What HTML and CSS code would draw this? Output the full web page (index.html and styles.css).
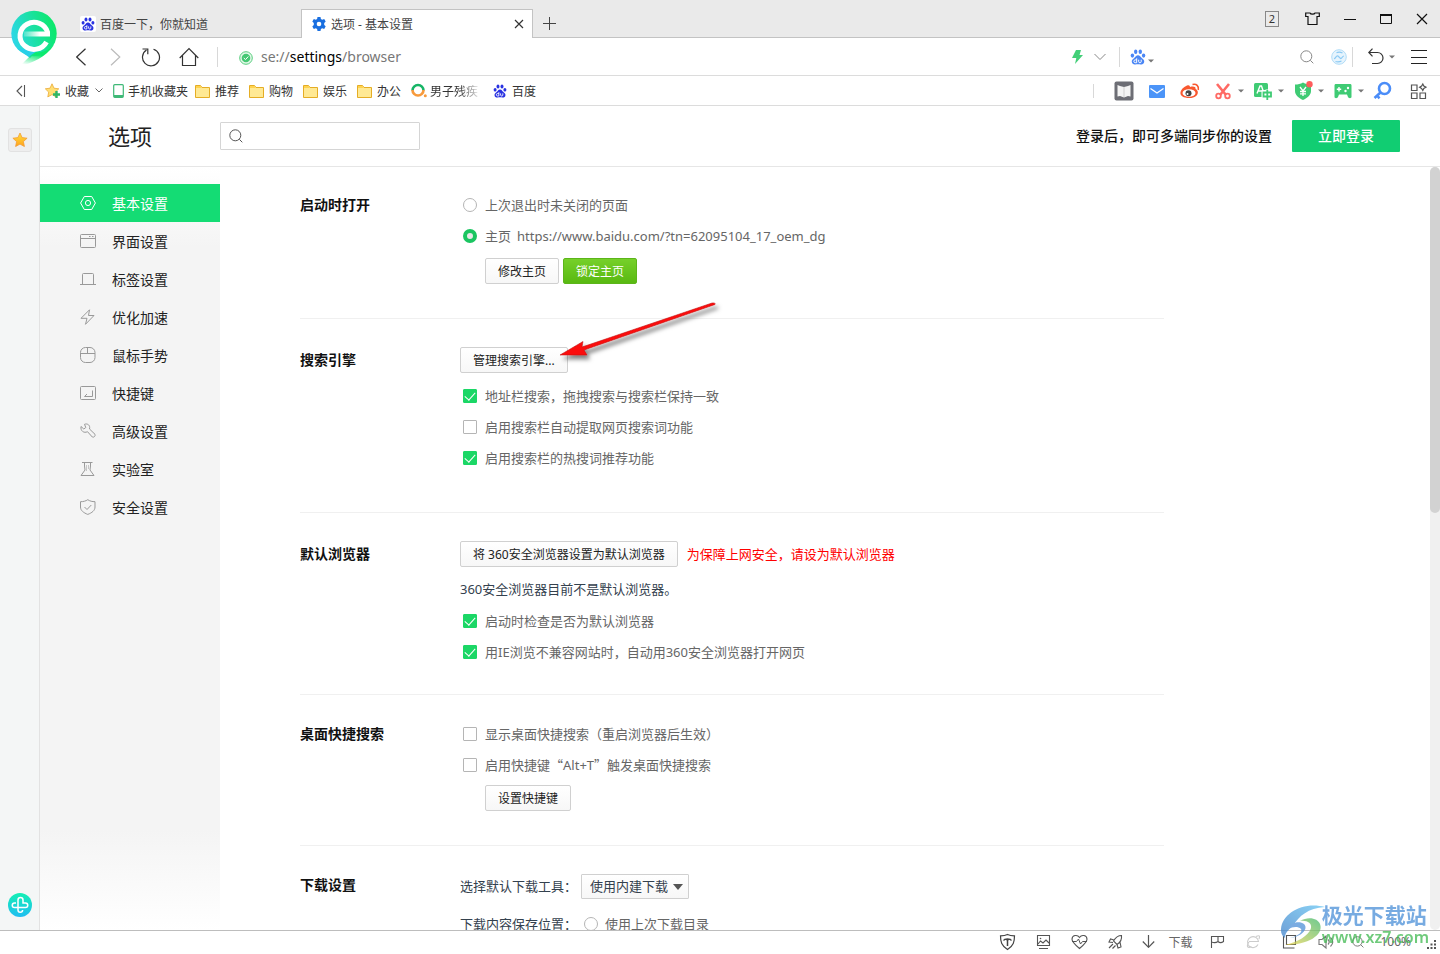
FILE: index.html
```html
<!DOCTYPE html>
<html lang="zh-CN">
<head>
<meta charset="utf-8">
<title>选项 - 基本设置</title>
<link rel="stylesheet" href="styles.css">
</head>
<body>
<svg class="defs" aria-hidden="true">
  <defs>
    <symbol id="paw" viewBox="0 0 16 16">
      <ellipse cx="2.4" cy="6.6" rx="1.7" ry="2.1"/><ellipse cx="5.7" cy="2.8" rx="1.7" ry="2.3"/><ellipse cx="10.3" cy="2.8" rx="1.7" ry="2.3"/><ellipse cx="13.6" cy="6.6" rx="1.7" ry="2.1"/>
      <path d="M8 6.2c1.8 0 2.500 1.600 3.800 2.800 1.500 1.300 2.700 2 2.400 4-.3 1.900-1.700 2.600-3.500 2.400-1.800-.2-3.600-.2-5.400 0-1.800.2-3.200-.5-3.500-2.400-.3-2 .9-2.700 2.400-4C5.500 7.800 6.200 6.200 8 6.200z"/>
      <path d="M6.700 9.300v4.400H5.200c-1.800 0-1.800-2.800 0-2.800h1.500M8.700 10.700v2c0 1.400 2.500 1.400 2.500 0v-2" fill="none" stroke="#fff" stroke-width="1"/>
    </symbol>
    <symbol id="folder" viewBox="0 0 15 14">
      <path d="M.5 1.500h5l1.500 2h7.500v10H.5z" fill="#ffe994" stroke="#e5ad25"/><path d="M1 2h4.300l1.500 2H1z" fill="#ffd34f"/>
    </symbol>
    <symbol id="magnifier" viewBox="0 0 14 14">
      <circle cx="6.300" cy="6.300" r="5.500" fill="none" stroke="currentColor"/><path d="M10.300 10.300l3 3" stroke="currentColor"/>
    </symbol>
    <symbol id="caret" viewBox="0 0 6 4"><path d="M0 .5h6L3 3.500z" fill="#777"/></symbol>
  </defs>
</svg>
<div class="browser">
  <svg class="brand" viewBox="0 0 48 60" role="img" aria-label="360安全浏览器">
    <defs>
      <linearGradient id="brandFill" x1="0" y1=".7" x2="1" y2=".4"><stop offset="0" stop-color="#2fd6ee"/><stop offset=".5" stop-color="#1ce0a8"/><stop offset="1" stop-color="#0be968"/></linearGradient>
      <linearGradient id="brandTail" x1=".7" y1="0" x2=".3" y2="1"><stop offset="0" stop-color="#0be968"/><stop offset=".45" stop-color="#0cea70"/><stop offset="1" stop-color="#10e47b" stop-opacity="0"/></linearGradient>
      <linearGradient id="brandBar" x1="0" x2="1"><stop offset="0" stop-color="#fff" stop-opacity=".2"/><stop offset=".6" stop-color="#fff"/></linearGradient>
    </defs>
    <circle cx="24" cy="24.500" r="22.700" fill="url(#brandFill)"/>
    <path d="M7 39.500l13 9.500 8-8z" fill="#29cfe8"/>
    <path d="M21 46L10 57c12-3 26-9 34-21-6 6-13 8-18 7z" fill="url(#brandTail)"/>
    <path d="M36.500 33A14 13.500 0 1 1 37.600 23.500" fill="none" stroke="#fff" stroke-width="5"/>
    <path d="M14 22.500h26v5H14z" fill="url(#brandBar)"/>
  </svg>

  <header class="tabbar">
    <div class="tab">
      <span class="favicon"><svg width="14" height="14" fill="#2932e1"><use href="#paw"/></svg></span>
      <span class="tab-title">百度一下，你就知道</span>
    </div>
    <div class="tab tab-active">
      <svg width="14" height="14" viewBox="0 0 14 14"><path d="M5.500 0h3l.4 2 1.300.7L12.200 2l1.500 2.600-1.500 1.400v1.900l1.500 1.400-1.500 2.600-2-.6-1.300.7-.4 2h-3l-.4-2-1.300-.7-2 .6L.3 9.400 1.800 8V6L.3 4.600 1.800 2l2 .7L5.100 2z" fill="#1a6fe0"/><circle cx="7" cy="7" r="2.300" fill="#fff"/></svg>
      <span class="tab-title">选项 - 基本设置</span>
      <button class="icon-button" aria-label="关闭标签"><svg width="10" height="10" viewBox="0 0 10 10"><path d="M1 1l8 8M9 1L1 9" stroke="#333" stroke-width="1.200"/></svg></button>
    </div>
    <button class="icon-button new-tab" aria-label="新建标签"><svg width="13" height="13" viewBox="0 0 13 13"><path d="M6.500 0v13M0 6.500h13" stroke="#444"/></svg></button>
    <div class="window-buttons">
      <button class="count">2</button>
      <button class="icon-button" aria-label="皮肤"><svg width="15" height="13" viewBox="0 0 15 13"><path d="M.7 1H5c.5 1.500 4.500 1.500 5 0h4.300v3.500H12v8H3v-8H.7z" fill="none" stroke="#111" stroke-width="1.200"/></svg></button>
      <button class="icon-button" aria-label="最小化"><svg width="12" height="12" viewBox="0 0 12 12"><path d="M0 6.500h12" stroke="#111"/></svg></button>
      <button class="icon-button" aria-label="最大化"><svg width="12" height="12" viewBox="0 0 12 12"><path d="M.5 1.500h11v9H.5z" fill="none" stroke="#111"/><path d="M0 2h12" stroke="#111" stroke-width="2"/></svg></button>
      <button class="icon-button" aria-label="关闭"><svg width="12" height="12" viewBox="0 0 12 12"><path d="M1 1l10 10M11 1L1 11" stroke="#111" stroke-width="1.200"/></svg></button>
    </div>
  </header>

  <div class="addressbar">
    <nav class="nav-buttons">
      <button class="icon-button" aria-label="后退"><svg width="11" height="18" viewBox="0 0 11 18"><path d="M9.500.7L.7 9l8.800 8.300" fill="none" stroke="#333" stroke-width="1.200"/></svg></button>
      <button class="icon-button" aria-label="前进"><svg width="11" height="18" viewBox="0 0 11 18"><path d="M1 .7L9.800 9 1 17.300" fill="none" stroke="#bbb" stroke-width="1.200"/></svg></button>
      <button class="icon-button" aria-label="刷新"><svg width="20" height="20" viewBox="0 0 20 20"><path d="M12.500 2.200a8.500 8.500 0 1 1-7 .9M1.500 2h5.300v5.300" fill="none" stroke="#333" stroke-width="1.200"/></svg></button>
      <button class="icon-button" aria-label="主页"><svg width="20" height="20" viewBox="0 0 20 20"><path d="M.7 11L10 1.500l9.300 9.500M3.500 8.500v10h13v-10" fill="none" stroke="#333" stroke-width="1.200"/></svg></button>
    </nav>
    <span class="divider"></span>
    <svg class="secure" width="14" height="14" viewBox="0 0 14 14"><circle cx="7" cy="7" r="6.300" fill="#e4f8e9" stroke="#58cd7e"/><circle cx="7" cy="7" r="4.300" fill="#45c873"/><path d="M4.800 7l1.700 1.600L9.300 5.500" fill="none" stroke="#fff"/></svg>
    <div class="url"><span>se://</span><b>settings</b><span>/browser</span></div>
    <div class="mode">
      <button class="icon-button" aria-label="极速模式"><svg width="11" height="14" viewBox="0 0 11 14"><path d="M4 0h5L7.500 5H11L3 14l1.300-6H0z" fill="#43cf78"/></svg></button>
      <button class="icon-button" aria-label="切换模式"><svg width="12" height="8" viewBox="0 0 12 8"><path d="M.5 1L6 6.500 11.500 1" fill="none" stroke="#888"/></svg></button>
    </div>
    <span class="divider"></span>
    <div class="quick-search">
      <button class="icon-button" aria-label="百度"><svg width="16" height="16" fill="#4a86f5"><use href="#paw"/></svg><svg class="low" width="6" height="4"><use href="#caret"/></svg></button>
      <input type="text" aria-label="搜索">
      <button class="icon-button muted" aria-label="搜索"><svg width="14" height="14"><use href="#magnifier"/></svg></button>
    </div>
    <button class="icon-button" aria-label="加速"><svg width="16" height="16" viewBox="0 0 16 16"><circle cx="8" cy="8" r="7.300" fill="#e6f4fd" stroke="#b1dcf7"/><path d="M3 9.500c1.500.5 2-3.500 4-2.500l2.500 2.500c1.500.5 1.500-2.500 3.500-2.500M4.500 12.500c2 .5 4 .5 6-.5M5.500 3.700c2-1 4-.8 6 .3" fill="none" stroke="#8ccaf4" stroke-width="1.200"/></svg></button>
    <span class="divider"></span>
    <button class="icon-button undo" aria-label="恢复"><svg width="16" height="17" viewBox="0 0 16 17"><path d="M4.500.700L.8 4.500l3.700 3.800M1 4.500h8.500a5.500 5.500 0 0 1 0 11H4" fill="none" stroke="#333" stroke-width="1.200"/></svg><svg width="6" height="4"><use href="#caret"/></svg></button>
    <button class="icon-button menu" aria-label="菜单"><svg width="16" height="14" viewBox="0 0 16 14"><path d="M0 .5h16M0 7.500h16M0 13.500h16" stroke="#222"/></svg></button>
  </div>

  <div class="bookmarks">
    <button class="icon-button collapse" aria-label="收起"><svg width="10" height="12" viewBox="0 0 10 12"><path d="M6 1L1 6l5 5M8.500 0v12" fill="none" stroke="#555" stroke-width="1.100"/></svg></button>
    <a class="bookmark fav" href="#"><svg width="16" height="16" viewBox="0 0 16 16"><path d="M7 .8l2 4.400 4.800.6-3.500 3.300.9 4.800L7 11.600l-4.200 2.300.9-4.800L.3 5.800 5 5.200z" fill="#ffdf73" stroke="#eba935" stroke-width=".8"/><path d="M11.500 8v7M8 11.500h7" stroke="#2eb667" stroke-width="2.400"/></svg>收藏<svg class="fav-more" width="8" height="5" viewBox="0 0 8 5"><path d="M.5.500L4 4 7.500.500" fill="none" stroke="#666"/></svg></a>
    <a class="bookmark phone" href="#"><svg width="11" height="14" viewBox="0 0 11 14"><rect x=".7" y=".7" width="9.600" height="12.600" rx="1" fill="#fff" stroke="#3fb977" stroke-width="1.200"/><path d="M1 11h9v2H1z" fill="#3fb977"/></svg>手机收藏夹</a>
    <a class="bookmark" href="#"><svg width="15" height="14"><use href="#folder"/></svg>推荐</a>
    <a class="bookmark" href="#"><svg width="15" height="14"><use href="#folder"/></svg>购物</a>
    <a class="bookmark" href="#"><svg width="15" height="14"><use href="#folder"/></svg>娱乐</a>
    <a class="bookmark" href="#"><svg width="15" height="14"><use href="#folder"/></svg>办公</a>
    <a class="bookmark" href="#"><svg width="16" height="15" viewBox="0 0 16 15"><path d="M1.500 7.500a5.500 5.500 0 0 1 11 0" fill="none" stroke="#17b566" stroke-width="2.600"/><path d="M1.500 7a5.500 5.500 0 0 0 11 0" fill="none" stroke="#f79a3c" stroke-width="2.600"/><circle cx="14.300" cy="12.700" r="1.500" fill="#f79a3c"/></svg><span class="fade">男子残疾</span></a>
    <a class="bookmark last" href="#"><svg width="14" height="14" fill="#2932e1"><use href="#paw"/></svg>百度</a>
    <div class="extensions">
      <span class="divider short"></span>
      <div class="ext-plain">
        <button class="icon-button" aria-label="阅读"><svg width="20" height="20" viewBox="0 0 20 20"><rect x=".5" y=".5" width="19" height="19" rx="2" fill="#6d6e75"/><path d="M3.500 4l2.500 1 4 1 4-1 2.500-1v11.500L14 15l-4 1.500L6 15l-2.500.5z" fill="#f4f4f4"/><path d="M10 6v10" stroke="#d0d0d0"/></svg></button>
        <button class="icon-button" aria-label="邮件"><svg width="20" height="20" viewBox="0 0 20 20"><rect x="2" y="4" width="16" height="13" rx="1" fill="#4b94f8"/><path d="M3.500 7.500L10 12l6.500-4.500" fill="none" stroke="#fff" stroke-width="1.300"/></svg></button>
        <button class="icon-button" aria-label="微博"><svg width="20" height="20" viewBox="0 0 20 20"><path d="M7 4.500c2.500-1 3 .5 3 1.500 4-1 6 0 5.500 2C20 10 18 17 9.500 17 0 17-1.500 12 2.500 7.500 4 6 5.500 5 7 4.500z" fill="#f9582f"/><ellipse cx="9" cy="12" rx="6.500" ry="3.800" fill="#fff"/><circle cx="8.500" cy="12.300" r="3" fill="#444"/><circle cx="7.500" cy="13" r="1" fill="#fff"/><path d="M12.500 3.500c4-1 6.500 1.500 5.800 5.500" fill="none" stroke="#f9582f" stroke-width="1.600"/></svg></button>
      </div>
      <div class="ext-menu">
        <button class="icon-button" aria-label="截图"><svg width="20" height="20" viewBox="0 0 20 20"><path d="M4 3l9 11M16 3L7 14" stroke="#ff6a64" stroke-width="2.600"/><circle cx="5.500" cy="15" r="2.300" fill="none" stroke="#ff6a64" stroke-width="1.800"/><circle cx="14.500" cy="15" r="2.300" fill="none" stroke="#ff6a64" stroke-width="1.800"/></svg><svg width="6" height="4"><use href="#caret"/></svg></button>
        <button class="icon-button" aria-label="翻译"><svg width="20" height="20" viewBox="0 0 20 20"><rect x="1" y="2" width="14" height="14" rx="1.500" fill="#3fcb74"/><path d="M4 12.500L7 5h1.500l2.500 7.500M5 10h5" fill="none" stroke="#fff" stroke-width="1.400"/><path d="M10.500 11h8v5h-8zM14.500 8.500v11" fill="none" stroke="#fff" stroke-width="4"/><path d="M10.500 11.500h7.500v4h-7.500zM14.300 9v10" fill="none" stroke="#3fcb74" stroke-width="1.800"/></svg><svg width="6" height="4"><use href="#caret"/></svg></button>
        <button class="icon-button" aria-label="购物"><svg width="20" height="20" viewBox="0 0 20 20"><path d="M10 1.500c2.500 1.500 5 2 8 2V10c0 4-3.500 7-8 9-4.500-2-8-5-8-9V3.500c3 0 5.500-.5 8-2z" fill="#3fcb74"/><path d="M7 6l3 4 3-4M10 10v5M7 10.500h6M7 12.800h6" fill="none" stroke="#fff" stroke-width="1.300"/><circle cx="16.500" cy="3.300" r="3.200" fill="#ff5c5c"/></svg><svg width="6" height="4"><use href="#caret"/></svg></button>
        <button class="icon-button" aria-label="游戏"><svg width="20" height="20" viewBox="0 0 20 20"><path d="M3 3h14c1 0 1.500.5 1.500 1.500V16c0 1.500-3 1.500-3.500 0l-1-2.500H6L5 16c-.5 1.500-3.500 1.500-3.500 0V4.500C1.500 3.500 2 3 3 3z" fill="#3fcb74"/><path d="M3.800 8.300h4.400M6 6v4.500" stroke="#fff" stroke-width="1.400"/><circle cx="12.500" cy="10" r="1.200" fill="#fff"/><circle cx="15" cy="7" r="1.200" fill="#fff"/></svg><svg width="6" height="4"><use href="#caret"/></svg></button>
        <button class="icon-button" aria-label="密码"><svg width="20" height="20" viewBox="0 0 20 20"><circle cx="11.500" cy="7.500" r="5.500" fill="none" stroke="#4b8df8" stroke-width="2.600"/><path d="M7.500 11.500L1.500 17M4 14.500l2.500 2.800" stroke="#4b8df8" stroke-width="2.600"/></svg></button>
      </div>
      <button class="icon-button" aria-label="扩展"><svg width="18" height="18" viewBox="0 0 18 18"><path d="M2.500 3h5.500v5.500H2.500zM2.500 11h5.500v5.500H2.500zM11 11h5.500v5.500H11z" fill="none" stroke="#555" stroke-width="1.200"/><path d="M13.800 2l1 2 2.200 1.200-2.200 1.300-1 2-1.200-2-2-1.300 2-1.200z" fill="none" stroke="#555" stroke-width="1.200"/></svg></button>
    </div>
  </div>

  <div class="workspace">
    <aside class="rail">
      <button class="rail-star" aria-label="收藏"><svg width="16" height="16" viewBox="0 0 16 16"><defs><linearGradient id="gold" x2="0" y2="1"><stop offset="0" stop-color="#ffe03b"/><stop offset="1" stop-color="#ffa21c"/></linearGradient></defs><path d="M8 1l2.100 4.600 5 .6-3.700 3.400 1 4.900L8 12.100l-4.400 2.400 1-4.900L.9 6.200l5-.6z" fill="url(#gold)" stroke="#f39a32" stroke-width=".8"/></svg></button>
      <button class="icon-button" aria-label="健康"><svg width="24" height="24" viewBox="0 0 24 24"><defs><linearGradient id="mint" x2="0" y2="1"><stop offset="0" stop-color="#14f0b4"/><stop offset="1" stop-color="#20bdf2"/></linearGradient></defs><circle cx="12" cy="12" r="12" fill="url(#mint)"/><path d="M10 14V7a2.500 2.500 0 0 1 5 0v3h2.500a2.200 2.200 0 0 1 0 4.500H6.500a2.200 2.200 0 0 1 0-4.500H8M10 14.500V17a2.300 2.300 0 0 0 4.600 0" fill="none" stroke="#fff" stroke-width="1.500"/></svg></button>
    </aside>
    <div class="settings">
      <div class="settings-head">
        <h1>选项</h1>
        <label class="search"><svg width="14" height="14"><use href="#magnifier"/></svg><input type="text" aria-label="搜索设置"></label>
        <p class="login-hint">登录后，即可多端同步你的设置</p>
        <button class="login">立即登录</button>
      </div>
      <div class="settings-body">
        <nav class="side">
          <a class="side-item current" href="#"><svg viewBox="0 0 16 16"><path d="M4.300 1.500h7.400l3.700 6.500-3.700 6.500H4.300L.6 8z"/><circle cx="8" cy="8" r="2.600"/></svg>基本设置</a>
          <a class="side-item" href="#"><svg viewBox="0 0 16 16"><rect x=".5" y="1.500" width="15" height="13" rx="1"/><path d="M.5 5.500h15M9 3.500h1.500M12 3.500h1.500"/></svg>界面设置</a>
          <a class="side-item" href="#"><svg viewBox="0 0 16 16"><path d="M2.500 13V3.500a1 1 0 0 1 1-1h9a1 1 0 0 1 1 1V13M0 13.500h16"/></svg>标签设置</a>
          <a class="side-item" href="#"><svg viewBox="0 0 16 16"><path d="M9.500.8L1 9.300h6l-1.500 6L14 6.500H8.500z"/></svg>优化加速</a>
          <a class="side-item" href="#"><svg viewBox="0 0 16 16"><rect x=".5" y=".5" width="14.500" height="15" rx="5"/><path d="M.5 6.500H15M7.500.5v6"/></svg>鼠标手势</a>
          <a class="side-item" href="#"><svg viewBox="0 0 16 16"><rect x=".5" y="1.500" width="15" height="13" rx="1"/><path d="M12.500 5.500v6h-8l2.500-2.500"/></svg>快捷键</a>
          <a class="side-item" href="#"><svg viewBox="0 0 16 16"><path d="M1 3.500L3.800 6l2-1.500L4.500 1.300c3-1.200 6 1 5 4.700l5.500 5.300c.7 1.500-1 3.500-2.700 2.700L7.500 8.700C4 10.500.3 8 1 3.500z"/></svg>高级设置</a>
          <a class="side-item" href="#"><svg viewBox="0 0 16 16"><path d="M2 1.500h10.500M4.500 1.500v3.500l.5 4L1 14.500h13L10 9l.500-4V1.500"/><path d="M6.500 4.500v6M8.500 4.500v4" stroke-dasharray="1 1"/></svg>实验室</a>
          <a class="side-item" href="#"><svg viewBox="0 0 16 16"><path d="M7.800.700c2 1.400 4.500 2 7.200 2V8c0 3.500-3 5.800-7.200 7.400C3.500 13.800.5 11.500.5 8V2.700c2.700 0 5.300-.6 7.300-2z"/><path d="M4.500 8l2.500 2.500L11.300 6"/></svg>安全设置</a>
        </nav>
        <main class="content">
          <section class="group group-first">
            <h2>启动时打开</h2>
            <div class="fields">
              <label class="option"><input type="radio" name="startup">上次退出时未关闭的页面</label>
              <label class="option"><input type="radio" name="startup" checked>主页<span class="home-url">https://www.baidu.com/?tn=62095104_17_oem_dg</span></label>
              <div class="actions indent"><button class="button">修改主页</button><button class="button primary">锁定主页</button></div>
            </div>
          </section>
          <section class="group group-engine">
            <h2>搜索引擎</h2>
            <div class="fields">
              <div class="lead">
                <button class="button">管理搜索引擎...</button>
                <svg class="arrow" width="170" height="66" viewBox="0 0 170 66" aria-hidden="true"><defs><filter id="soft" x="-10%" y="-20%" width="120%" height="150%"><feDropShadow dx="3" dy="4" stdDeviation="2" flood-color="#000" flood-opacity=".5"/></filter></defs><path d="M2 54L25 40.500l-1 5.500L154 2q4-.5 3 1.500L26 49l3 5z" fill="#fb0808" stroke="#b80a0a" stroke-width=".5" filter="url(#soft)"/></svg>
              </div>
              <label class="option"><input type="checkbox" checked>地址栏搜索，拖拽搜索与搜索栏保持一致</label>
              <label class="option"><input type="checkbox">启用搜索栏自动提取网页搜索词功能</label>
              <label class="option"><input type="checkbox" checked>启用搜索栏的热搜词推荐功能</label>
            </div>
          </section>
          <section class="group group-default">
            <h2>默认浏览器</h2>
            <div class="fields">
              <div class="lead"><button class="button">将 360安全浏览器设置为默认浏览器</button><span class="warning">为保障上网安全，请设为默认浏览器</span></div>
              <p class="note">360安全浏览器目前不是默认浏览器。</p>
              <label class="option"><input type="checkbox" checked>启动时检查是否为默认浏览器</label>
              <label class="option"><input type="checkbox" checked>用IE浏览不兼容网站时，自动用360安全浏览器打开网页</label>
            </div>
          </section>
          <section class="group group-desktop">
            <h2>桌面快捷搜索</h2>
            <div class="fields">
              <label class="option"><input type="checkbox">显示桌面快捷搜索（重启浏览器后生效）</label>
              <label class="option"><input type="checkbox"><span>启用快捷键<span class="cjk">“</span>Alt+T<span class="cjk">”</span>触发桌面快捷搜索</span></label>
              <div class="actions indent"><button class="button">设置快捷键</button></div>
            </div>
          </section>
          <section class="group group-download">
            <h2>下载设置</h2>
            <div class="fields">
              <div class="lead tool"><label for="tool">选择默认下载工具：</label><span class="select"><select id="tool"><option>使用内建下载</option></select></span></div>
              <div class="location"><span>下载内容保存位置：</span><label class="option"><input type="radio" name="location">使用上次下载目录</label></div>
            </div>
          </section>
        </main>
        <div class="scrollbar"><div class="thumb"></div></div>
      </div>
    </div>
  </div>

  <footer class="status">
    <button class="icon-button" aria-label="防护"><svg width="20" height="18" viewBox="0 0 20 18"><path d="M9.500 1.500c2 1 4.500 1.300 7 1.300 0 6-1 10-7 13.700-6-3.700-7-7.700-7-13.700 2.500 0 5-.3 7-1.300z" fill="none" stroke="#444" stroke-width="1.200"/><path d="M5.500 7.500c1-2 7-2 8 0M9.500 6v7M8 6.500h3" fill="none" stroke="#444" stroke-width="1.500"/></svg></button>
    <button class="icon-button" aria-label="图片"><svg width="20" height="18" viewBox="0 0 20 18"><path d="M3.500 2.500h12v10h-12zM5 15.500h9M4 11l2.500-3 2.500 2 3-3 3 3" fill="none" stroke="#555" stroke-width="1.100"/><circle cx="6.500" cy="5.500" r=".8" fill="#555"/></svg></button>
    <button class="icon-button" aria-label="医生"><svg width="20" height="18" viewBox="0 0 20 18"><path d="M9.500 15.500C4 11 2 9 2 6.300c0-4 5.200-5.300 7.500-1.800 2.300-3.500 7.500-2.200 7.500 1.800 0 2.700-2 4.700-7.500 9.200z" fill="none" stroke="#555" stroke-width="1.100"/><path d="M2 8.500h4.500l2-2.500 2 5 2-2.500h4.500" fill="none" stroke="#555"/></svg></button>
    <button class="icon-button" aria-label="加速器"><svg width="20" height="18" viewBox="0 0 20 18"><path d="M15.500 2.500c-4 0-6 2-8 5.500l3.500 3.500c3.500-2 5-5 4.500-9zM8 7L4.500 6 3 9l4 .5M11 11.500l1 3.500 3-1-1-5M7 11l-4 4M9.500 12.500l-3 3" fill="none" stroke="#555" stroke-width="1.100"/></svg></button>
    <button class="icon-button download"><svg width="13" height="13" viewBox="0 0 13 13"><path d="M6.500 0v12M.8 6.500l5.700 5.800 5.700-5.800" fill="none" stroke="#555" stroke-width="1.200"/></svg>下载</button>
    <button class="icon-button" aria-label="旗标"><svg width="20" height="18" viewBox="0 0 20 18"><path d="M3.500 15V3.500h12v5c-2 1.500-4 1.500-5.500 0-2 1.500-4 1.500-6.500.5M10 3.500v5" fill="none" stroke="#555" stroke-width="1.100"/></svg></button>
    <button class="icon-button" aria-label="兼容模式"><svg width="20" height="18" viewBox="0 0 20 18"><path d="M14 11.500A5.500 5.500 0 1 1 14.500 8.500H5M12 3.500c4-2 4 0 3 2.500M5 9c-3 4-1.500 7 2.500 4.500" fill="none" stroke="#ccc" stroke-width="1.100"/></svg></button>
    <button class="icon-button" aria-label="窗口"><svg width="20" height="18" viewBox="0 0 20 18"><path d="M6.500 2.500h9v9h-9zM3.500 3v12h11" fill="none" stroke="#555" stroke-width="1.100"/></svg></button>
    <button class="icon-button" aria-label="声音"><svg width="20" height="18" viewBox="0 0 20 18"><path d="M3 6.500h3l4-3.500v12l-4-3.500H3zM12 6.500c1.500 1.500 1.500 3.500 0 5M14.500 4.500c3 3 3 6 0 9" fill="none" stroke="#777" stroke-width="1.100"/></svg></button>
    <button class="icon-button zoom"><svg width="12" height="12" viewBox="0 0 14 14"><use href="#magnifier"/></svg>100%</button>
    <svg class="grip" width="9" height="9" viewBox="0 0 9 9"><path d="M7 0h2v2H7zM3.500 3.500h2v2h-2zM7 3.500h2v2H7zM0 7h2v2H0zM3.500 7h2v2h-2zM7 7h2v2H7z" fill="#555"/></svg>
  </footer>

  <div class="watermark">
    <svg width="46" height="42" viewBox="0 0 46 42" aria-hidden="true"><defs><linearGradient id="wmBlue" x1="0" y1="1" x2="1" y2="0"><stop offset="0" stop-color="#3d7fc9"/><stop offset="1" stop-color="#64c4f2"/></linearGradient><linearGradient id="wmGreen" x1="0" y1="1" x2="1" y2="0"><stop offset="0" stop-color="#f0d552"/><stop offset="1" stop-color="#3fb96c"/></linearGradient></defs><path d="M45 3C24-3 2 9 1 25c-.3 4 1 7 4 9 0-5 3-8 8-12C19 12 28 4 45 3z" fill="url(#wmBlue)"/><path d="M20 17c8-5 18-3 20 3 4 11-12 21-35 21 12-3 24-9 26-17 1-5-4-8-11-7z" fill="url(#wmGreen)"/><path d="M8 25c2-6 11-9 16-5 5 5-3 13-14 14 8-2 13-6 11-9-3-3-9-2-13 0z" fill="#4f91d8"/></svg>
    <div class="wm-text"><strong>极光下载站</strong><span>www.xz7.com</span></div>
  </div>
</div>
</body>
</html>
```

FILE: styles.css
```css
* { box-sizing: border-box; }

body {
  margin: 0;
  font-family: "Noto Sans", "Noto Sans CJK SC", sans-serif;
  font-size: 13px;
  color: #333;
  background: #fff;
}

h1, h2, p { margin: 0; }
a { color: inherit; text-decoration: none; }
button, input, select { font: inherit; color: inherit; }
svg { display: block; flex: none; }
.defs { position: absolute; width: 0; height: 0; }

.browser {
  position: relative;
  display: flex;
  flex-direction: column;
  height: 100vh;
  overflow: hidden;
}

.brand {
  position: absolute;
  left: 10px;
  top: 9px;
  width: 48px;
  height: 60px;
  z-index: 2;
}

.icon-button {
  display: flex;
  align-items: center;
  gap: 5px;
  flex: none;
  padding: 0;
  border: 0;
  background: none;
}

.divider { width: 1px; height: 20px; background: #d8d8d8; flex: none; }
.divider.short { height: 14px; }

/* Tabs */
.tabbar {
  display: flex;
  align-items: flex-end;
  height: 38px;
  padding-left: 70px;
  background: #eaeaea;
  box-shadow: inset 0 -1px #c3c3c3;
  flex: none;
}
.tab {
  display: flex;
  align-items: center;
  gap: 4px;
  width: 231px;
  height: 29px;
  padding: 0 8px 0 10px;
  font-size: 12px;
  color: #444;
}
.tab-active {
  gap: 5px;
  width: 232px;
  background: #fff;
  border: 1px solid #c3c3c3;
  border-bottom: 0;
}
.tab-title { flex: 1; }
.favicon { padding: 1px; background: #fff; border-radius: 2px; }
.new-tab { height: 29px; margin-left: 10px; }
.window-buttons {
  display: flex;
  align-items: center;
  align-self: flex-start;
  gap: 24px;
  height: 37px;
  margin-left: auto;
  padding-right: 12px;
}
.count {
  width: 14px;
  height: 16px;
  margin-right: 2px;
  padding: 0;
  border: 1px solid #888;
  background: none;
  font-size: 11px;
  line-height: 14px;
}

/* Address bar */
.addressbar {
  display: flex;
  align-items: center;
  height: 38px;
  padding: 0 13px 0 76px;
  border-bottom: 1px solid #dcdcdc;
  flex: none;
}
.nav-buttons { display: flex; align-items: center; gap: 18px; margin-right: 18px; }
.nav-buttons .icon-button:nth-child(2) { margin: 0 2px 0 5px; }
.secure { margin: 2px 8px 0 21px; }
.url { flex: 1; font-size: 14px; color: #777; }
.url b { font-weight: 400; color: #000; }
.mode { display: flex; gap: 11px; margin-right: 13px; }
.quick-search { display: flex; align-items: center; margin: 0 17px 0 10px; }
.quick-search .icon-button { gap: 2px; }
.quick-search input { width: 146px; border: 0; outline: 0; background: none; }
.low { margin-top: 8px; }
.muted { color: #888; }
.addressbar > .icon-button + .divider { margin-left: 5px; }
.undo { margin: 0 16px 0 15px; }

/* Bookmarks */
.bookmarks {
  display: flex;
  align-items: center;
  height: 30px;
  padding: 0 13px 0 16px;
  border-bottom: 1px solid #dcdcdc;
  font-size: 12px;
  color: #333;
  flex: none;
}
.collapse { margin-right: 19px; }
.bookmark { display: flex; align-items: center; gap: 5px; margin-right: 10px; white-space: nowrap; }
.bookmark.fav, .bookmark.phone { gap: 4px; }
.bookmark.phone { margin-right: 7px; }
.fav-more { margin-left: 2px; }
.fade {
  width: 52px;
  margin: 0 1px 0 -2px;
  overflow: hidden;
  -webkit-mask-image: linear-gradient(90deg, #000 55%, transparent);
  mask-image: linear-gradient(90deg, #000 55%, transparent);
}
.extensions { display: flex; align-items: center; margin-left: auto; }
.ext-plain { display: flex; gap: 13px; margin: 0 13px 0 20px; }
.ext-menu { display: flex; gap: 9px; margin-right: 16px; }

/* Workspace */
.workspace { display: flex; flex: 1; min-height: 0; }
.rail {
  display: flex;
  flex-direction: column;
  align-items: center;
  justify-content: space-between;
  width: 40px;
  padding: 22px 0 13px;
  background: #f4f6f6;
  border-right: 1px solid #e2e2e2;
  flex: none;
}
.rail-star {
  display: flex;
  align-items: center;
  justify-content: center;
  width: 24px;
  height: 24px;
  padding: 0;
  border: 1px solid #e2e2e2;
  border-radius: 3px;
  background: #eee;
}
.settings { display: flex; flex-direction: column; flex: 1; min-width: 0; }
.settings-head {
  display: flex;
  align-items: center;
  height: 61px;
  padding: 0 40px 0 68px;
  border-bottom: 1px solid #e6e6e6;
  flex: none;
}
h1 { width: 112px; font-size: 22px; line-height: 30px; font-weight: 400; color: #222; }
.search {
  display: flex;
  align-items: center;
  gap: 8px;
  width: 200px;
  height: 28px;
  padding: 0 8px;
  border: 1px solid #d5d5d5;
  border-radius: 1px;
  color: #555;
}
.search input { flex: 1; min-width: 0; border: 0; outline: 0; background: none; }
.login-hint { margin-left: auto; padding-bottom: 2px; font-size: 14px; font-weight: 500; color: #111; }
.login {
  width: 108px;
  height: 32px;
  margin-left: 20px;
  padding: 0 0 2px;
  border: 0;
  border-radius: 1px;
  background: #11cd72;
  color: #fff;
  font-size: 14px;
  font-weight: 500;
}

.settings-body { display: flex; flex: 1; min-height: 0; }
.side {
  width: 180px;
  padding-top: 17px;
  background: linear-gradient(#fff, #f4f4f4 80px, #f4f4f4 calc(100% - 100px), #fff);
  flex: none;
}
.side-item {
  display: flex;
  align-items: center;
  gap: 16px;
  height: 38px;
  padding: 0 0 1px 40px;
  font-size: 14px;
  color: #222;
}
.side-item svg { width: 16px; height: 16px; fill: none; stroke: #999; }
.side-item.current { background: #14dc74; color: #fff; }
.side-item.current svg { stroke: #fff; }

.content { flex: 1; min-width: 0; padding: 0 80px; overflow: hidden; }
.group {
  display: flex;
  max-width: 864px;
  border-bottom: 1px solid #f0f0f0;
}
.group h2 { width: 160px; flex: none; font-size: 14px; font-weight: 700; line-height: 26px; color: #111; }
.group-first { padding: 22px 0 34px; }
.group-engine { padding: 28px 0 39px; }
.group-default { padding: 28px 0 27px; }
.group-desktop { padding: 23px 0 34px; }
.group-download { padding: 28px 0; }
.group-first h2, .group-desktop h2 { line-height: 31px; }
.group-download h2 { line-height: 22px; }
.fields { flex: 1; }

.option {
  display: flex;
  align-items: center;
  height: 31px;
  padding-left: 3px;
  color: #666;
}
.option input {
  appearance: none;
  width: 14px;
  height: 14px;
  margin: 0 8px 0 0;
  border: 1px solid #b5b5b5;
  background: #fff;
  flex: none;
}
.option input[type="checkbox"] { display: grid; place-items: start center; border-radius: 1px; }
.option input[type="checkbox"]:checked { border-color: #1bd766; background: #1bd766; }
.option input[type="checkbox"]:checked::before {
  content: "";
  width: 9px;
  height: 5px;
  margin-top: 2px;
  border: solid #fff;
  border-width: 0 0 1px 1px;
  transform: rotate(-48deg);
}
.option input[type="radio"] { border-radius: 50%; }
.option input[type="radio"]:checked { border: 4px solid #1bc561; background: #e8e8e8; }
.home-url { margin-left: 6px; }
.cjk { font-family: "Noto Sans CJK SC", sans-serif; }

.actions { display: flex; gap: 4px; margin-top: 7px; }
.group-desktop .actions { margin-top: 5px; }
.indent { padding-left: 25px; }
.lead { position: relative; display: flex; align-items: center; margin-bottom: 7px; }
.button {
  height: 26px;
  padding: 2px 12px 0;
  border: 1px solid #d0d0d0;
  border-radius: 2px;
  background: linear-gradient(#fff, #f7f7f7);
  font-size: 12px;
  line-height: 22px;
  color: #222;
}
.button.primary { border-color: #5cb51a; background: linear-gradient(#76d02a, #59b911); color: #fff; }
.warning { margin-left: 9px; padding-bottom: 2px; color: #f00; }
.note { line-height: 31px; color: #34414e; }
.tool, .location { color: #34414e; }
.tool label { padding-bottom: 2px; }
.location { display: flex; align-items: center; margin-top: 9px; }
.location .option { padding-left: 7px; }
.location .option input { margin-right: 7px; }
.select { position: relative; margin-left: 4px; }
.select select {
  appearance: none;
  display: block;
  width: 108px;
  height: 25px;
  padding: 0 8px 2px;
  border: 1px solid #d0d0d0;
  border-radius: 1px;
  background: linear-gradient(#fff, #f7f7f7);
}
.select::after {
  content: "";
  position: absolute;
  right: 6px;
  top: 10px;
  border: 5px solid transparent;
  border-top: 6px solid #555;
  border-bottom: 0;
  pointer-events: none;
}
.arrow { position: absolute; left: 98px; bottom: 6px; overflow: visible; }

.scrollbar { width: 10px; border-radius: 5px; background: #f0f0f0; flex: none; }
.thumb { height: 346px; border-radius: 5px; background: #d2d2d2; }

/* Status bar */
.status {
  display: flex;
  align-items: center;
  justify-content: flex-end;
  gap: 16px;
  height: 24px;
  padding: 0 4px 2px 0;
  border-top: 1px solid #bdbdbd;
  font-size: 12px;
  color: #666;
  flex: none;
}
.download { gap: 13px; }
.zoom { gap: 16px; }
.grip { align-self: flex-end; margin-bottom: 3px; }

.watermark {
  position: absolute;
  right: 11px;
  bottom: 7px;
  display: flex;
  align-items: center;
  opacity: .75;
  pointer-events: none;
}
.wm-text { display: flex; flex-direction: column; margin-left: -4px; }
.wm-text strong { font-size: 21px; line-height: 24px; color: #4a8fd8; }
.wm-text span { font-size: 16px; line-height: 20px; font-weight: 600; color: #3fb950; }
```
